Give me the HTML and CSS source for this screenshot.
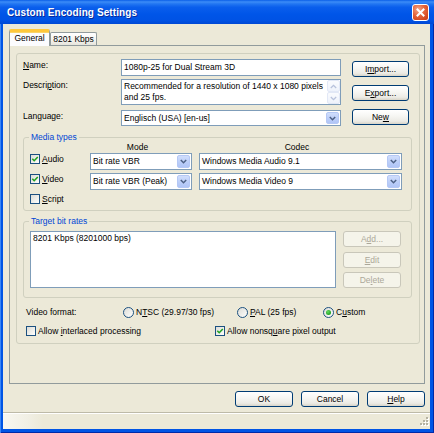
FILE: index.html
```html
<!DOCTYPE html>
<html lang="en">
<head>
<meta charset="utf-8">
<title>Custom Encoding Settings</title>
<link rel="stylesheet" href="styles.css">
</head>
<body>
<div class="window">
  <div class="titlebar">
    <span class="title">Custom Encoding Settings</span>
    <span class="close">
      <svg width="15" height="15" viewBox="0 0 15 15"><path d="M4.5 4.5L10.5 10.5M10.5 4.5L4.5 10.5" stroke="#fff" stroke-width="2" stroke-linecap="square"/></svg>
    </span>
  </div>
  <div class="client">
    <div class="tabstrip">
      <div class="tab tab-sel">General</div>
      <div class="tab">8201 Kbps</div>
    </div>
    <div class="panel">
      <div class="page">
        <div class="topform">
          <div class="fields">
            <div class="frow frow-name">
              <span class="lbl"><u>N</u>ame:</span>
              <div class="edit"><span class="etext">1080p-25 for Dual Stream 3D</span></div>
            </div>
            <div class="frow frow-desc">
              <span class="lbl">Descri<u>p</u>tion:</span>
              <div class="edit memo">
                <div class="memo-text">Recommended for a resolution of 1440 x 1080 pixels<br>and 25 fps.</div>
                <div class="vscroll">
                  <span class="sbtn"><svg width="7" height="5" viewBox="0 0 7 5"><path d="M0.8 4L3.5 1.3L6.2 4" fill="none" stroke="#B8C2DC" stroke-width="1.3"/></svg></span>
                  <span class="sbtn"><svg width="7" height="5" viewBox="0 0 7 5"><path d="M0.8 1L3.5 3.7L6.2 1" fill="none" stroke="#B8C2DC" stroke-width="1.3"/></svg></span>
                </div>
              </div>
            </div>
            <div class="frow frow-lang">
              <span class="lbl">Language:</span>
              <div class="combo"><span class="ctext">Englisch (USA) [en-us]</span><span class="drop"><svg width="7" height="5" viewBox="0 0 7 5"><path d="M0.8 1L3.5 3.7L6.2 1" fill="none" stroke="#4D6185" stroke-width="1.5"/></svg></span></div>
            </div>
          </div>
          <div class="sidebtns">
            <div class="btn">I<u>m</u>port...</div>
            <div class="btn">E<u>x</u>port...</div>
            <div class="btn">Ne<u>w</u></div>
          </div>
        </div>

        <fieldset class="group group-media">
          <legend>Media types</legend>
          <div class="media-grid">
            <span></span>
            <span class="colhead">Mode</span>
            <span class="colhead">Codec</span>

            <div class="chk-item"><span class="chk"><svg width="8" height="8" viewBox="0 0 8 8"><path d="M1.3 3.8L3.2 5.7L6.8 2" fill="none" stroke="#21A121" stroke-width="1.6"/></svg></span><span><u>A</u>udio</span></div>
            <div class="combo"><span class="ctext">Bit rate VBR</span><span class="drop"><svg width="7" height="5" viewBox="0 0 7 5"><path d="M0.8 1L3.5 3.7L6.2 1" fill="none" stroke="#4D6185" stroke-width="1.5"/></svg></span></div>
            <div class="combo"><span class="ctext">Windows Media Audio 9.1</span><span class="drop"><svg width="7" height="5" viewBox="0 0 7 5"><path d="M0.8 1L3.5 3.7L6.2 1" fill="none" stroke="#4D6185" stroke-width="1.5"/></svg></span></div>

            <div class="chk-item"><span class="chk"><svg width="8" height="8" viewBox="0 0 8 8"><path d="M1.3 3.8L3.2 5.7L6.8 2" fill="none" stroke="#21A121" stroke-width="1.6"/></svg></span><span><u>V</u>ideo</span></div>
            <div class="combo"><span class="ctext">Bit rate VBR (Peak)</span><span class="drop"><svg width="7" height="5" viewBox="0 0 7 5"><path d="M0.8 1L3.5 3.7L6.2 1" fill="none" stroke="#4D6185" stroke-width="1.5"/></svg></span></div>
            <div class="combo"><span class="ctext">Windows Media Video 9</span><span class="drop"><svg width="7" height="5" viewBox="0 0 7 5"><path d="M0.8 1L3.5 3.7L6.2 1" fill="none" stroke="#4D6185" stroke-width="1.5"/></svg></span></div>

            <div class="chk-item"><span class="chk"></span><span><u>S</u>cript</span></div>
          </div>
        </fieldset>

        <fieldset class="group group-rates">
          <legend>Target bit rates</legend>
          <div class="rates">
            <div class="listbox"><div class="litem">8201 Kbps (8201000 bps)</div></div>
            <div class="ratebtns">
              <div class="btn btn-dis">A<u>d</u>d...</div>
              <div class="btn btn-dis btn-edit"><u>E</u>dit</div>
              <div class="btn btn-dis btn-del">De<u>l</u>ete</div>
            </div>
          </div>
        </fieldset>

        <div class="vfrow">
          <span class="vflabel">Video format:</span>
          <div class="radio-item ri-ntsc"><span class="radio"></span><span>N<u>T</u>SC (29.97/30 fps)</span></div>
          <div class="radio-item ri-pal"><span class="radio"></span><span><u>P</u>AL (25 fps)</span></div>
          <div class="radio-item"><span class="radio radio-on"><span class="dot"></span></span><span>C<u>u</u>stom</span></div>
        </div>

        <div class="optrow">
          <div class="chk-item opt-first"><span class="chk"></span><span>Allow <u>i</u>nterlaced processing</span></div>
          <div class="chk-item"><span class="chk"><svg width="8" height="8" viewBox="0 0 8 8"><path d="M1.3 3.8L3.2 5.7L6.8 2" fill="none" stroke="#21A121" stroke-width="1.6"/></svg></span><span>Allow nonsq<u>u</u>are pixel output</span></div>
        </div>
      </div>
    </div>

    <div class="footer">
      <div class="btn btn-foot">OK</div>
      <div class="btn btn-foot">Cancel</div>
      <div class="btn btn-foot"><u>H</u>elp</div>
    </div>

    <div class="statusbar">
      <svg class="grip" width="11" height="11" viewBox="0 0 11 11">
        <g fill="#FFFFFF">
          <rect x="9" y="1" width="2" height="2"/><rect x="6" y="4" width="2" height="2"/><rect x="9" y="4" width="2" height="2"/>
          <rect x="3" y="7" width="2" height="2"/><rect x="6" y="7" width="2" height="2"/><rect x="9" y="7" width="2" height="2"/>
        </g>
        <g fill="#B5B2A2">
          <rect x="8" y="0" width="2" height="2"/><rect x="5" y="3" width="2" height="2"/><rect x="8" y="3" width="2" height="2"/>
          <rect x="2" y="6" width="2" height="2"/><rect x="5" y="6" width="2" height="2"/><rect x="8" y="6" width="2" height="2"/>
        </g>
      </svg>
    </div>
  </div>
</div>
</body>
</html>
```

FILE: styles.css
```css
* { box-sizing: border-box; }

html, body {
  margin: 0;
  padding: 0;
}

body {
  width: 434px;
  height: 433px;
  overflow: hidden;
  background: #0055E5;
  font-family: "Liberation Sans", Arial, sans-serif;
  font-size: 8.5px;
  line-height: 11px;
  color: #000;
}

u { text-decoration: underline; text-underline-offset: 1px; }

.window {
  width: 434px;
  height: 433px;
  display: flex;
  flex-direction: column;
  background: #0055E5;
  box-shadow: inset 1px 0 0 #3A86F7, inset -1px 0 0 #002AA8, inset 0 -1px 0 #002AA8;
}

.titlebar {
  flex: none;
  height: 24px;
  display: flex;
  align-items: center;
  padding: 0 5px 0 7px;
  background: linear-gradient(to bottom, #0A5FE8 0%, #3C8CF7 8%, #2276F2 16%, #0A5EEC 30%, #0055E8 60%, #0052E4 85%, #0048D4 100%);
}

.title {
  flex: 1;
  color: #fff;
  font-weight: bold;
  font-size: 10px;
  letter-spacing: 0.1px;
  text-shadow: 1px 1px 0 #0A2A9C;
}

.close {
  width: 17px;
  height: 17px;
  border: 1px solid #fff;
  border-radius: 3px;
  background: radial-gradient(circle at 35% 30%, #F4A88B 0%, #E5643A 45%, #D2461E 80%, #C23A18 100%);
  display: flex;
  align-items: center;
  justify-content: center;
}

.client {
  flex: 1;
  margin: 0 4px 4px 3px;
  background: #ECE9D8;
  display: flex;
  flex-direction: column;
}

/* tabs */
.tabstrip {
  flex: none;
  height: 21px;
  padding-left: 6px;
  display: flex;
  align-items: flex-end;
}

.tab {
  height: 13px;
  width: 47px;
  border: 1px solid #919B9C;
  border-bottom: none;
  border-radius: 2px 2px 0 0;
  background: linear-gradient(to bottom, #FFFFFF, #F3F3EF 60%, #E6E4DB);
  display: flex;
  align-items: center;
  justify-content: center;
  padding-top: 1px;
}

.tab-sel {
  position: relative;
  z-index: 2;
  width: 41px;
  height: 17px;
  margin-bottom: -1px;
  background: #FCFCFE;
  border-top: 3px solid #FFC83C;
  box-shadow: inset 0 1px 0 #F9D46A;
  padding-top: 0;
  padding-bottom: 2px;
}

.panel {
  flex: none;
  width: 416px;
  height: 339px;
  margin-left: 6px;
  border: 1px solid #919B9C;
  background: #ECE9D8;
  padding: 7px 4px 0 6px;
}

.page {
  height: 291px;
  border: 1px solid #D0D0BF;
  border-radius: 3px;
  padding: 5px 0 0 6px;
}

/* top form */
.topform {
  display: flex;
}

.fields {
  width: 318px;
  display: flex;
  flex-direction: column;
}

.frow {
  display: grid;
  grid-template-columns: 98px 220px;
}

.frow-name { height: 17px; margin-bottom: 3px; }
.frow-desc { height: 26px; margin-bottom: 5px; }
.frow-lang { height: 16px; }

.lbl {
  padding-top: 1px;
}

.edit {
  border: 1px solid #7F9DB9;
  background: #fff;
  padding: 0 0 0 2px;
  display: flex;
  align-items: center;
  white-space: nowrap;
  overflow: hidden;
}

.memo {
  align-items: stretch;
  padding-right: 0;
}

.memo-text {
  flex: 1;
  padding-top: 1px;
  line-height: 11px;
}

.vscroll {
  width: 13px;
  display: flex;
  flex-direction: column;
}

.sbtn {
  flex: 1;
  border: 1px solid #E2E8F6;
  border-radius: 2px;
  background: linear-gradient(to bottom, #FAFBFE, #EEF2FB);
  display: flex;
  align-items: center;
  justify-content: center;
}

.combo {
  border: 1px solid #7F9DB9;
  background: #fff;
  display: flex;
  align-items: stretch;
  white-space: nowrap;
  overflow: hidden;
}

.ctext {
  flex: 1;
  padding-left: 2px;
  display: flex;
  align-items: center;
}

.drop {
  width: 13px;
  margin: 1px;
  border: 1px solid #B5C8F5;
  border-radius: 2px;
  background: linear-gradient(to bottom, #D0DEFC, #BACDF8 60%, #B0C5F6);
  display: flex;
  align-items: center;
  justify-content: center;
}

.sidebtns {
  margin-left: 11px;
  padding-top: 2px;
  display: flex;
  flex-direction: column;
  gap: 8px;
}

.btn {
  width: 57px;
  height: 16px;
  border: 1px solid #003C74;
  border-radius: 3px;
  background: linear-gradient(to bottom, #FFFFFF 0%, #F7F7F4 40%, #ECEBE5 80%, #D8D4C8 100%);
  display: flex;
  align-items: center;
  justify-content: center;
  white-space: nowrap;
}

.btn-dis {
  width: 58px;
  border-color: #C9C7BA;
  background: #F5F4EA;
  color: #ACA899;
}

.btn-edit { margin-top: 5px; }
.btn-del { margin-top: 4px; }

/* groups */
.group {
  width: 389px;
  margin: 0;
  padding: 0;
  border: 1px solid #D0D0BF;
  border-radius: 3px;
  min-inline-size: 0;
}

.group legend {
  margin-left: 5px;
  padding: 0 2px;
  color: #0046D5;
  line-height: 10px;
}

.group-media {
  margin-top: 6px;
  padding-bottom: 7px;
}

.media-grid {
  padding-left: 6px;
  display: grid;
  grid-template-columns: 53px 102px 203px;
  grid-template-rows: 11px 20px 20px 10px;
  column-gap: 7px;
}

.media-grid .combo {
  height: 17px;
}

.colhead {
  text-align: center;
  padding-right: 7px;
  line-height: 10px;
}

.chk-item {
  display: flex;
  align-items: center;
  gap: 2px;
  height: 10px;
  white-space: nowrap;
}

.media-grid .chk-item {
  margin-top: 1px;
}

.chk {
  flex: none;
  width: 10px;
  height: 10px;
  border: 1px solid #1C5180;
  background: linear-gradient(135deg, #DCDCD7 0%, #F4F4F1 70%, #FFFFFF 100%);
  display: flex;
  align-items: center;
  justify-content: center;
}

.group-rates {
  margin-top: 5px;
  padding-bottom: 9px;
}

.rates {
  display: flex;
  padding: 5px 0 0 6px;
}

.listbox {
  width: 306px;
  height: 57px;
  border: 1px solid #7F9DB9;
  background: #fff;
  padding: 1px 0 0 2px;
}

.ratebtns {
  margin-left: 7px;
  display: flex;
  flex-direction: column;
}

/* video format */
.vfrow {
  margin-top: 8px;
  height: 12px;
  padding-left: 3px;
  display: flex;
  align-items: center;
}

.vflabel { width: 97px; }

.radio-item {
  display: flex;
  align-items: center;
  gap: 2px;
  white-space: nowrap;
}

.ri-ntsc { width: 114px; }
.ri-pal { width: 86px; }

.radio {
  flex: none;
  width: 11px;
  height: 11px;
  border: 1px solid #1C5180;
  border-radius: 50%;
  background: linear-gradient(135deg, #DCDCD7 0%, #F4F4F1 70%, #FFFFFF 100%);
  display: flex;
  align-items: center;
  justify-content: center;
}

.dot {
  width: 5px;
  height: 5px;
  border-radius: 50%;
  background: radial-gradient(circle at 40% 35%, #62D95E, #21A121 70%);
}

.optrow {
  margin-top: 7px;
  height: 12px;
  padding-left: 3px;
  display: flex;
  align-items: center;
}

.opt-first { width: 189px; }

/* footer */
.footer {
  flex: none;
  margin-top: 7px;
  padding-right: 5px;
  display: flex;
  justify-content: flex-end;
  gap: 8px;
}

.btn-foot { width: 58px; }

.statusbar {
  flex: 1;
  margin-top: 5px;
  border-top: 1px solid #BDBAA8;
  box-shadow: inset 0 1px 0 #FFFFFF;
  background: linear-gradient(to right, #F8F7F1 0px, #F1EFE4 25px, #ECE9D8 40px);
  display: flex;
  justify-content: flex-end;
  align-items: flex-end;
  padding: 0 1px 1px 0;
}
```
